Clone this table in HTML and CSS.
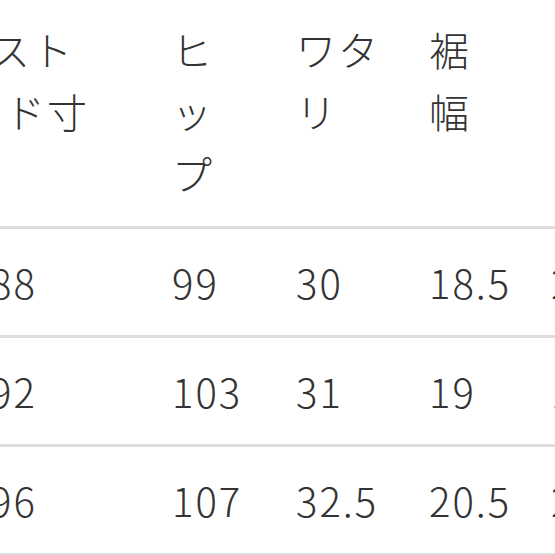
FILE: index.html
```html
<!DOCTYPE html>
<html lang="ja">
<head>
<meta charset="utf-8">
<title>サイズ表</title>
<link rel="stylesheet" href="styles.css">
</head>
<body>
<table class="size-table">
  <colgroup>
    <col class="col-a">
    <col class="col-b">
    <col class="col-c">
    <col class="col-d">
    <col class="col-e">
  </colgroup>
  <thead>
    <tr>
      <th><span class="line">スト</span><span class="line indent">ド寸</span></th>
      <th><span class="narrow">ヒップ</span></th>
      <th><span class="wide">ワタリ</span></th>
      <th><span class="narrow">裾幅</span></th>
      <th><span class="wide">ヒザ</span></th>
    </tr>
  </thead>
  <tbody>
    <tr><td>88</td><td>99</td><td>30</td><td>18.5</td><td>22</td></tr>
    <tr><td>92</td><td>103</td><td>31</td><td>19</td><td>19</td></tr>
    <tr><td>96</td><td>107</td><td>32.5</td><td>20.5</td><td>23</td></tr>
  </tbody>
</table>
</body>
</html>
```
FILE: styles.css
```css
html, body {
  margin: 0;
  padding: 0;
  background: #ffffff;
  overflow: hidden;
}

.size-table {
  margin-left: -10px;
  border-collapse: collapse;
  table-layout: fixed;
  width: 701px;
  font-family: "Noto Sans CJK JP", "Noto Sans", sans-serif;
  font-weight: 300;
  font-size: 40px;
  letter-spacing: 2px;
  color: #333333;
}

.col-a { width: 182px; }
.col-b { width: 124px; }
.col-c { width: 133px; }
.col-d { width: 122px; }
.col-e { width: 140px; }

.size-table th,
.size-table td {
  padding: 0;
  text-align: left;
  font-weight: 300;
  border-bottom: 3px solid #dddddd;
}

.size-table th {
  height: 227px;
  box-sizing: border-box;
  padding-top: 18px;
  vertical-align: top;
  line-height: 62px;
  line-break: loose;
  word-break: break-all;
}

.size-table td {
  height: 106px;
  vertical-align: middle;
  line-height: 58px;
}

.line {
  display: block;
}

.indent {
  margin-left: 15px;
}

.narrow {
  display: block;
  width: 60px;
}

.wide {
  display: block;
  width: 100px;
}
```
